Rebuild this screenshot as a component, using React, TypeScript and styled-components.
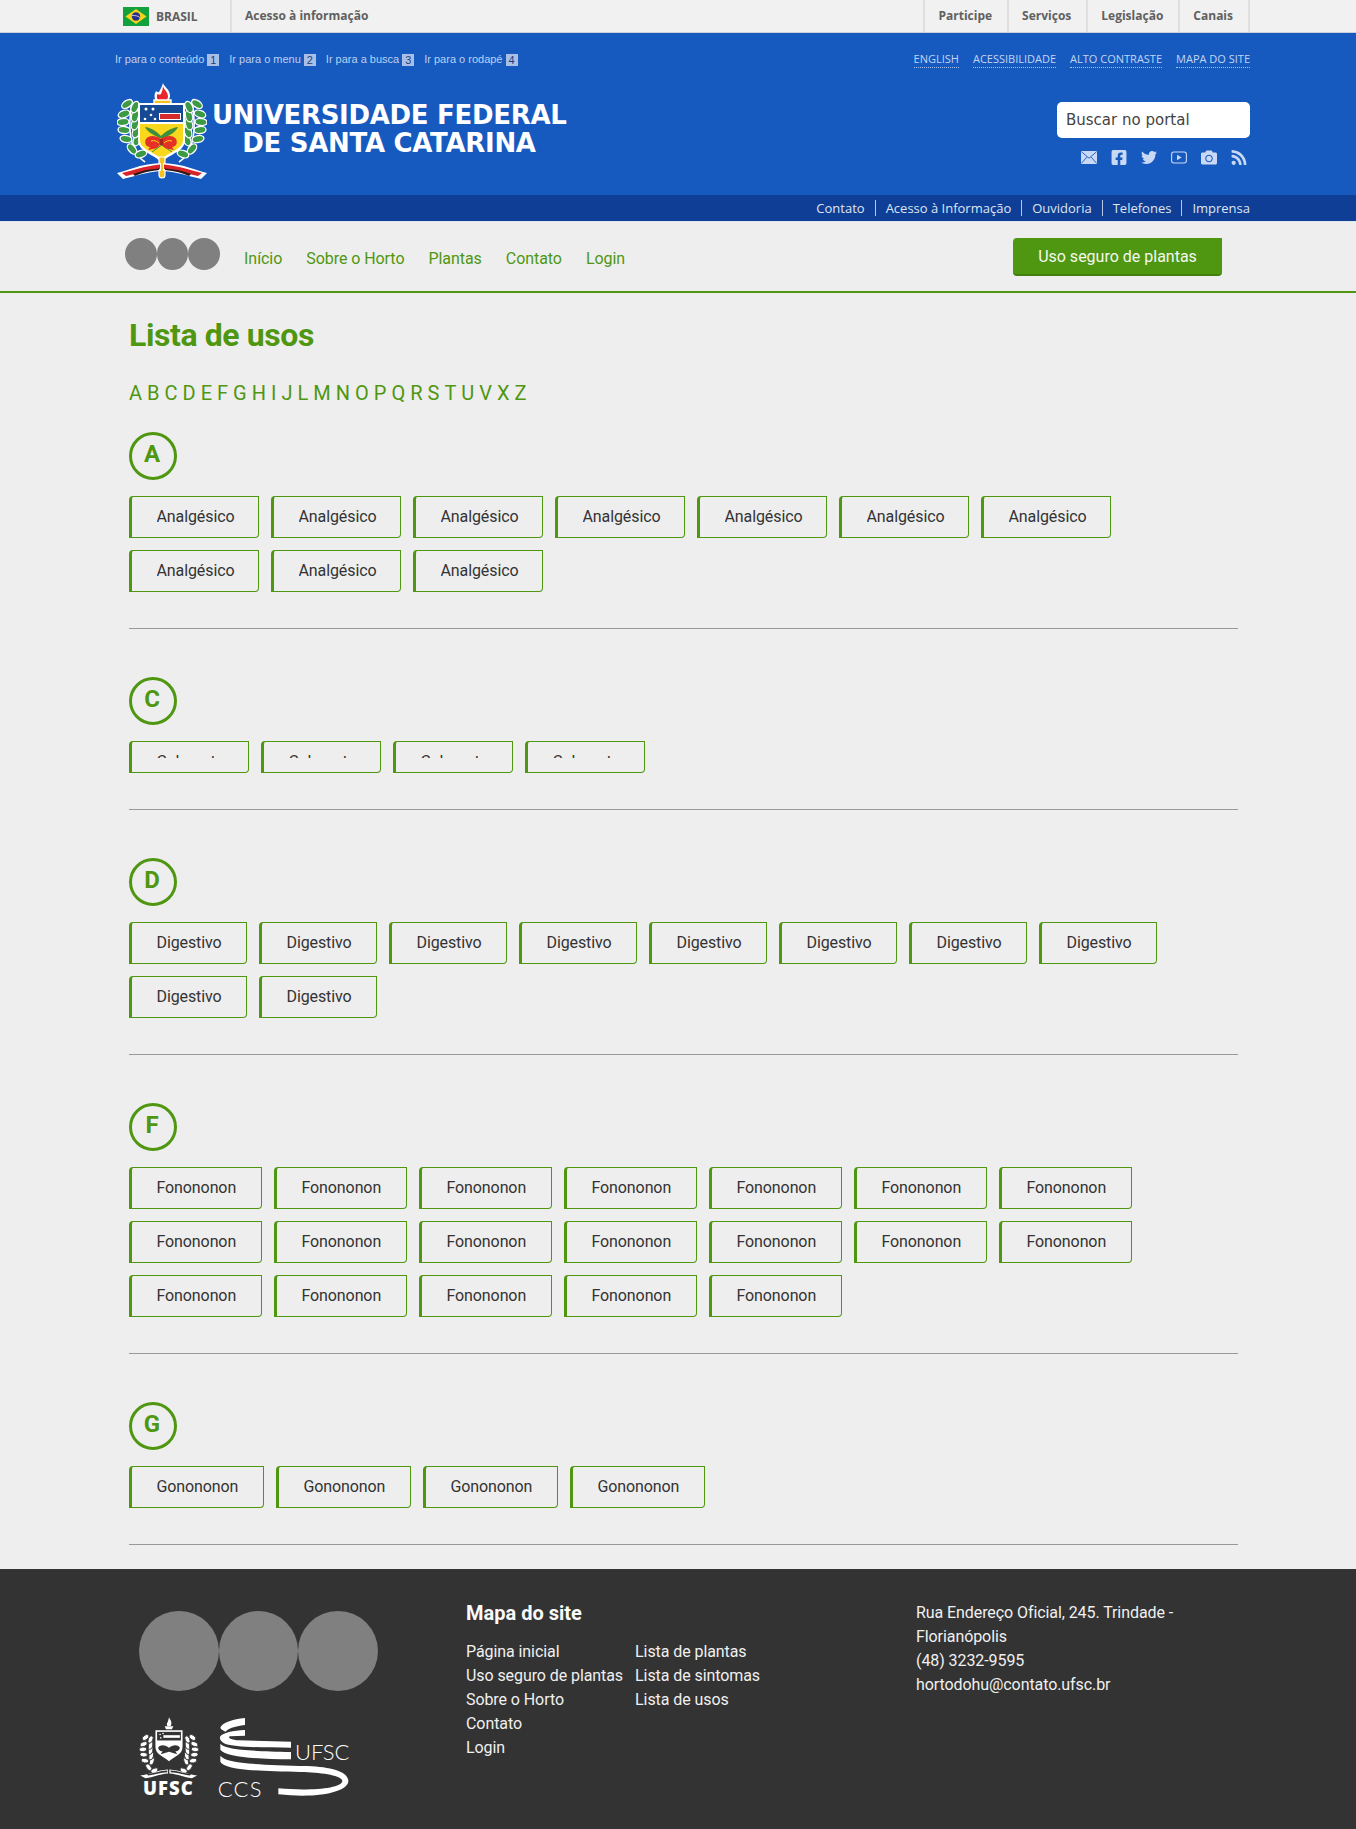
import React from "react";
import styled, { createGlobalStyle } from "styled-components";
import { FaFacebookSquare, FaTwitter, FaRss, FaCamera } from "react-icons/fa";

const green = "#4f9711";

const Global = createGlobalStyle`
  html, body { margin: 0; padding: 0; background: #eeeeee; }
  body { font-family: Roboto, "Liberation Sans", sans-serif; }
  a { text-decoration: none; color: inherit; }
  * { box-sizing: border-box; }
`;

const TopBar = styled.div`
  height: 33px;
  background: #f1f1f1;
  border-bottom: 1px solid #c9d0da;
  display: flex;
  justify-content: space-between;
  padding: 0 106px 0 123px;
  font-family: "Open Sans", sans-serif;
  font-size: 12px;
  font-weight: 700;
  color: #606060;
`;
const BarLeft = styled.div`display: flex; align-items: stretch;`;
const BrasilMark = styled.div`
  display: flex;
  align-items: center;
  gap: 7px;
  width: 109px;
  border-right: 2px solid #dfdfdf;
`;
const BrasilName = styled.span`padding-top: 1px;`;
const BarInfo = styled.a`display: flex; align-items: center; padding: 0 0 2px 13px;`;
const BarRight = styled.div`display: flex; border-right: 2px solid #dfdfdf;`;
const BarItem = styled.a`
  display: flex;
  align-items: center;
  padding: 0 15px 2px 13px;
  border-left: 2px solid #dfdfdf;
`;

const Masthead = styled.header`
  height: 162px;
  background: #175abf;
  padding: 18px 106px 0 115px;
`;
const SkipRow = styled.div`
  display: flex;
  justify-content: space-between;
  height: 17px;
`;
const SkipList = styled.div`
  display: flex;
  gap: 10px;
  font-family: "Liberation Sans", sans-serif;
  font-size: 11px;
  line-height: 17px;
  color: #bcd0f0;
`;
const SkipLink = styled.a`display: flex; align-items: center; gap: 3px;`;
const SkipKey = styled.span`
  width: 12px;
  height: 12px;
  background: #a9bfe6;
  color: #1f3f7c;
  font-size: 11px;
  line-height: 12px;
  text-align: center;
`;
const ToolList = styled.div`
  display: flex;
  gap: 14px;
  font-family: "Open Sans", sans-serif;
  font-size: 11px;
  line-height: 15px;
  color: #c3d5f3;
`;
const ToolLink = styled.a`
  height: 17px;
  border-bottom: 1px dotted #a9c2ea;
`;
const BrandRow = styled.div`
  display: flex;
  justify-content: space-between;
  padding-top: 15px;
`;
const Brand = styled.a`
  display: flex;
  align-items: flex-start;
  margin-left: 2px;
`;
const BrandName = styled.div`
  margin: 18px 0 0 5px;
  width: 354px;
  font-family: "DejaVu Sans", sans-serif;
  font-weight: 700;
  font-size: 26px;
  line-height: 28px;
  letter-spacing: -0.3px;
  color: #ffffff;
  text-align: center;
  white-space: nowrap;
`;
const SearchSide = styled.div`
  width: 193px;
  padding-top: 19px;
`;
const SearchBox = styled.div`
  height: 36px;
  background: #ffffff;
  border-radius: 5px;
  padding-left: 9px;
  font-family: "DejaVu Sans", sans-serif;
  font-size: 15px;
  line-height: 36px;
  color: #444444;
`;
const Socials = styled.div`
  display: flex;
  justify-content: flex-end;
  gap: 14px;
  margin-top: 11px;
  color: #c9d9f5;
  padding-right: 3px;
`;
const SocialSlot = styled.a`
  width: 16px;
  height: 17px;
  display: flex;
  align-items: center;
  justify-content: center;
  font-size: 17px;
`;

const ServiceStrip = styled.div`
  height: 27px;
  background: #0f3e96;
  border-bottom: 1px solid #dfe6f2;
  display: flex;
  justify-content: flex-end;
  align-items: center;
  padding-right: 106px;
  font-family: "Open Sans", sans-serif;
  font-size: 13px;
  color: #dfe6f2;
`;
const ServiceLink = styled.a`
  padding: 0 10px;
  line-height: 16px;
  border-left: 1px solid #b8c7e4;
  &:first-child { border-left: 0; }
  &:last-child { padding-right: 0; }
`;

const NavBar = styled.nav`
  height: 71px;
  border-bottom: 2px solid ${green};
  display: flex;
  align-items: flex-start;
  padding: 16px 134px 0 125px;
  font-size: 16px;
  color: ${green};
`;
const Dots = styled.div`display: flex; margin-right: 24px;`;
const Dot = styled.span<{ $size: number }>`
  display: block;
  width: ${(p) => p.$size}px;
  height: ${(p) => Math.round(p.$size)}px;
  border-radius: 50%;
  background: #808080;
`;
const NavLinks = styled.div`
  display: flex;
  gap: 24px;
  flex: 1;
  line-height: 20px;
  padding-top: 11px;
  letter-spacing: -0.06px;
`;
const SafeButton = styled.a`
  width: 209px;
  height: 38px;
  background: ${green};
  border-bottom: 2px solid #437f0e;
  border-radius: 4px 0 4px 4px;
  color: #f4f8ee;
  text-align: center;
  line-height: 37px;
`;

const Main = styled.main`
  padding: 22px 118px 0 129px;
`;
const Title = styled.h1`
  margin: 0;
  font-size: 32px;
  line-height: 40px;
  font-weight: 700;
  letter-spacing: -0.4px;
  color: ${green};
`;
const Alphabet = styled.div`
  margin: 26px 0 27px;
  display: flex;
  gap: 5px;
  font-size: 20px;
  line-height: 24px;
  color: ${green};
`;
const Section = styled.section`
  padding-bottom: 36px;
  margin-bottom: 48px;
  border-bottom: 1px solid #999999;
  &:last-child { margin-bottom: 24px; }
`;
const LetterBadge = styled.div`
  width: 48px;
  height: 48px;
  border: 3px solid ${green};
  border-radius: 50%;
  display: flex;
  align-items: center;
  justify-content: center;
  padding: 0 2px 4px 0;
  font-size: 24px;
  font-weight: 700;
  color: ${green};
`;
const Chips = styled.div`
  display: flex;
  flex-wrap: wrap;
  gap: 12px;
  margin-top: 16px;
`;
const Chip = styled.a<{ $short?: boolean; $width: number }>`
  width: ${(p) => p.$width}px;
  height: ${(p) => (p.$short ? 32 : 42)}px;
  padding: 10px 0 0 24.5px;
  border: 1px solid ${green};
  border-left-width: 3px;
  border-radius: 4px 0 4px 0;
  font-size: 16px;
  line-height: 20px;
  letter-spacing: -0.1px;
  color: #333333;
  overflow: hidden;
`;
const ChipLabel = styled.span<{ $short?: boolean }>`
  display: block;
  height: ${(p) => (p.$short ? 6 : 20)}px;
  overflow: hidden;
`;

const Footer = styled.footer`
  height: 260px;
  background: #333333;
  display: grid;
  grid-template-columns: 327px 450px 280px;
  padding: 32px 0 0 139px;
  color: #f0f0f0;
  font-size: 16px;
  line-height: 24px;
  letter-spacing: -0.08px;
`;
const FootLogos = styled.div`padding-top: 10px;`;
const FootDots = styled.div`display: flex;`;
const FootMarks = styled.div`
  display: flex;
  gap: 18px;
  margin-top: 25px;
`;
const SiteMap = styled.div``;
const SiteMapTitle = styled.h3`
  margin: 0 0 15px;
  font-size: 20px;
  line-height: 24px;
  font-weight: 700;
  letter-spacing: 0;
  color: #fafafa;
`;
const SiteMapCols = styled.div`display: flex; gap: 12px;`;
const SiteMapCol = styled.div`display: flex; flex-direction: column;`;
const Address = styled.address`
  font-style: normal;
  width: 270px;
`;

const Leaves = ({ fill, edge }: { fill: string; edge: string }) => {
  const leaves = [
    [20, 51, -24], [9, 50, 55], [19, 43, -28], [7, 41, 50], [18, 35, -30], [6, 33, 40],
    [18, 27, -32], [7, 25, 25], [18, 18, -20], [10, 15, 10],
  ];
  return (
    <g>
      <path d="M28 73C14 64 10 42 15 12" fill="none" stroke={edge} strokeWidth="1.6" />
      {leaves.map(([x, y, r], i) => (
        <ellipse key={i} cx={x} cy={y} rx="3.500" ry="6" transform={`rotate(${r + 45} ${x} ${y})`} fill={fill} stroke={edge} strokeWidth="1.300" />
      ))}
      <ellipse cx="15" cy="60" rx="3.500" ry="6" transform="rotate(-40 15 60)" fill={fill} stroke={edge} strokeWidth="1.300" />
      <ellipse cx="24" cy="65" rx="3.500" ry="6" transform="rotate(70 24 65)" fill={fill} stroke={edge} strokeWidth="1.300" />
    </g>
  );
};

const CrestColor = () => (
  <svg width="90" height="97" viewBox="0 0 90 97">
    <g transform="translate(0 6)"><Leaves fill="#3b9a43" edge="#ffffff" /></g>
    <g transform="translate(90 6) scale(-1 1)"><Leaves fill="#3b9a43" edge="#ffffff" /></g>
    <path d="M46 0c1 4 7 6 7 13 0 2-1 3-2 5H39c-2-3-2-7 0-10 1 1 2 1.500 3 1 1-2 3-5 4-9z" fill="#ffffff" />
    <path d="M46 3c1 4 5 6 5 10.500 0 1-.500 2-1 3.500h-9c-1.500-2-1.500-4-.500-6 1 .500 2 1 3.500 0 1-2 1.800-5 2-8z" fill="#e8242c" />
    <path d="M37 17h17v3c0 3-4 5-6 6v4h-5v-4c-2-1-6-3-6-6z" fill="#f6c21c" stroke="#ffffff" strokeWidth="1.400" />
    <path d="M21 20h47v37c0 11-13 13-23.500 22C34 70 21 68 21 57z" fill="#ffffff" />
    <path d="M23 22h43v35c0 9-12 11-21.500 19C35 68 23 66 23 57z" fill="#f9d71c" />
    <path d="M23 22h43v17H23z" fill="#174a94" />
    <path d="M23 39h43v2H23z" fill="#ffffff" />
    <path d="M42 30h22v7H42z" fill="#ffffff" />
    <path d="M43 31h20v5H43z" fill="#d72a2e" />
    <circle cx="29" cy="26" r="1.500" fill="#ffffff" /><circle cx="36" cy="26" r="1.500" fill="#ffffff" />
    <circle cx="34" cy="32" r="1.300" fill="#ffffff" /><circle cx="28" cy="36" r="1.300" fill="#ffffff" /><circle cx="38" cy="36" r="1.300" fill="#ffffff" />
    <path d="M28 44c8 1 13 6 16 9 3-3 9-8 17-9-2 5-9 9-16 12-7-3-15-7-17-12z" fill="#3f8e3c" />
    <path d="M33 54l22 15M56 54L35 69" stroke="#3f8e3c" strokeWidth="1" />
    <path d="M44 56c-3-3-12-5-15 0-2 4 0 8 4 8l-2 3 5-1c4 0 7-3 8-7 1 4 4 7 8 7l5 1-2-3c4 0 6-4 4-8-3-5-12-3-15 0z" fill="#e43026" />
    <path d="M34 58c3-1 6 0 8 2M55 58c-3-1-6 0-8 2" stroke="#f9d71c" strokeWidth="1" fill="none" />
    <path d="M43 56h3v6h-3z" fill="#a8231c" />
    <path d="M42 74h6v18c0 4-6 4-6 0z" fill="#f6c21c" stroke="#ffffff" strokeWidth="1.200" />
    <path d="M0 90c10-2 22-9 44-10v8C30 89 18 93 6 96z" fill="#ffffff" />
    <path d="M90 90c-10-2-22-9-44-10v8c14 1 26 5 38 8z" fill="#ffffff" />
    <path d="M5 90c10-2 22-7 38-8.500V86C30 87 18 91 9 93z" fill="#d8232a" />
    <path d="M85 90c-10-2-22-7-38-8.500V86c13 1 25 5 34 7z" fill="#d8232a" />
    <path d="M16 91c8-3 16-5 26-5.500v1.500C32 88 24 90 18 93zM74 91c-8-3-16-5-26-5.500v1.500c10 1 18 3 24 6z" fill="#2b1a1a" />
  </svg>
);

const CrestMono = () => (
  <svg width="60" height="81" viewBox="55 410 180 245">
    <path d="M145 414c3 8 9 12 7 20 0 3-1 4-2 6h-10c-2-4-2-8 1-11 1-4 3-8 4-15z" fill="#ffffff" />
    <path d="M132 441h26l-4 9h-18z" fill="#ffffff" />
    <g transform="translate(55 445) scale(1.900 2)"><Leaves fill="#ffffff" edge="#333333" /></g>
    <g transform="translate(235 445) scale(-1.900 2)"><Leaves fill="#ffffff" edge="#333333" /></g>
    <path d="M104 453h82v50c0 24-24 28-41 44-17-16-41-20-41-44z" fill="#ffffff" />
    <path d="M109 458h72v26h-72z" fill="#333333" />
    <path d="M128 468h50v8h-50z" fill="#ffffff" />
    <circle cx="118" cy="466" r="2.500" fill="#ffffff" /><circle cx="127" cy="463" r="2.500" fill="#ffffff" /><circle cx="120" cy="476" r="2.500" fill="#ffffff" />
    <path d="M112 506c8-12 23-8 33 0 10-8 25-12 33 0-2 8-8 12-14 10l6 10-25-8-25 8 6-10c-6 2-12-2-14-10z" fill="#333333" />
    <path d="M58 590c28-2 50-16 84-18v12c-28 2-44 12-68 14z" fill="#ffffff" />
    <path d="M230 590c-28-2-50-16-84-18v12c28 2 44 12 68 14z" fill="#ffffff" />
    <path d="M78 586c22-2 40-10 62-11v5c-22 1-40 8-58 10zM212 586c-22-2-40-10-62-11v5c22 1 40 8 58 10z" fill="#333333" />
    <text x="143" y="650" textAnchor="middle" fontFamily="Open Sans, sans-serif" fontWeight="800" fontSize="56" letterSpacing="3" fill="#ffffff">UFSC</text>
  </svg>
);

const CcsMark = () => (
  <svg width="134" height="83" viewBox="288 405 402 249">
    <g fill="#ffffff">
      <path d="M372 411V432C340 436 318 444 314 452C306 448 298 444 298 440C302 426 336 414 372 411Z" />
      <path d="M372 447V464L326 466C320 470 330 476 352 478L510 482V500C420 500 340 498 312 488C300 482 294 474 298 466C306 456 336 448 372 447Z" />
      <path d="M298 488C312 504 370 510 510 513V535C400 534 316 528 298 506Z" />
      <path d="M298 524C314 545 390 552 560 555C630 558 682 572 682 600C682 630 600 654 472 640V622C560 630 662 624 664 600C664 584 600 574 540 573C400 570 310 566 298 542Z" />
    </g>
    <text x="522" y="537" fontFamily="Lato, sans-serif" fontWeight="300" fontSize="66" fill="#ffffff">UFSC</text>
    <text x="290" y="647" fontFamily="Lato, sans-serif" fontWeight="300" fontSize="66" letterSpacing="4" fill="#ffffff">CCS</text>
  </svg>
);

const Flag = () => (
  <svg width="26" height="19" viewBox="0 0 26 19">
    <rect width="26" height="19" fill="#12a13c" />
    <path d="M13 2l10.500 7.500L13 17 2.500 9.500z" fill="#f7d417" />
    <circle cx="13" cy="9.500" r="4.200" fill="#2a2f8f" />
    <path d="M9 8.600c3-.400 6 .300 8 2" stroke="#ffffff" strokeWidth=".7" fill="none" />
  </svg>
);

const MailIcon = () => (
  <svg width="16" height="13" viewBox="0 0 16 13">
    <rect width="16" height="13" rx=".8" fill="currentColor" />
    <path d="M.5.800L8 7.200 15.500.800M.5 12.200L6 6M15.500 12.200L10 6" fill="none" stroke="#175abf" strokeWidth=".9" />
  </svg>
);
const PlayIcon = () => (
  <svg width="16" height="13" viewBox="0 0 16 13">
    <rect x=".6" y="1" width="14.800" height="11" rx="2.200" fill="none" stroke="currentColor" strokeWidth="1.100" />
    <path d="M6 3.800l4.600 2.700L6 9.200z" fill="currentColor" />
  </svg>
);

const alphabet = "A B C D E F G H I J L M N O P Q R S T U V X Z".split(" ");
const sections: { letter: string; word: string; count: number; width: number; short?: boolean }[] = [
  { letter: "A", word: "Analgésico", count: 10, width: 130 },
  { letter: "C", word: "Calmante", count: 4, width: 120, short: true },
  { letter: "D", word: "Digestivo", count: 10, width: 118 },
  { letter: "F", word: "Fonononon", count: 19, width: 133 },
  { letter: "G", word: "Gonononon", count: 4, width: 135 },
];

export default function App() {
  return (
    <>
      <Global />
      <TopBar>
        <BarLeft>
          <BrasilMark><Flag /><BrasilName>BRASIL</BrasilName></BrasilMark>
          <BarInfo>Acesso à informação</BarInfo>
        </BarLeft>
        <BarRight>
          {["Participe", "Serviços", "Legislação", "Canais"].map((t) => <BarItem key={t}>{t}</BarItem>)}
        </BarRight>
      </TopBar>
      <Masthead>
        <SkipRow>
          <SkipList>
            {["Ir para o conteúdo", "Ir para o menu", "Ir para a busca", "Ir para o rodapé"].map((t, i) => (
              <SkipLink key={t}>{t}<SkipKey>{i + 1}</SkipKey></SkipLink>
            ))}
          </SkipList>
          <ToolList>
            {["ENGLISH", "ACESSIBILIDADE", "ALTO CONTRASTE", "MAPA DO SITE"].map((t) => <ToolLink key={t}>{t}</ToolLink>)}
          </ToolList>
        </SkipRow>
        <BrandRow>
          <Brand>
            <CrestColor />
            <BrandName>UNIVERSIDADE FEDERAL<br />DE SANTA CATARINA</BrandName>
          </Brand>
          <SearchSide>
            <SearchBox>Buscar no portal</SearchBox>
            <Socials>
              <SocialSlot><MailIcon /></SocialSlot>
              <SocialSlot><FaFacebookSquare /></SocialSlot>
              <SocialSlot><FaTwitter /></SocialSlot>
              <SocialSlot><PlayIcon /></SocialSlot>
              <SocialSlot><FaCamera /></SocialSlot>
              <SocialSlot><FaRss /></SocialSlot>
            </Socials>
          </SearchSide>
        </BrandRow>
      </Masthead>
      <ServiceStrip>
        {["Contato", "Acesso à Informação", "Ouvidoria", "Telefones", "Imprensa"].map((t) => <ServiceLink key={t}>{t}</ServiceLink>)}
      </ServiceStrip>
      <NavBar>
        <Dots><Dot $size={31.7} /><Dot $size={31.7} /><Dot $size={31.7} /></Dots>
        <NavLinks>
          {["Início", "Sobre o Horto", "Plantas", "Contato", "Login"].map((t) => <a key={t}>{t}</a>)}
        </NavLinks>
        <SafeButton>Uso seguro de plantas</SafeButton>
      </NavBar>
      <Main>
        <Title>Lista de usos</Title>
        <Alphabet>{alphabet.map((l) => <a key={l}>{l}</a>)}</Alphabet>
        {sections.map((s) => (
          <Section key={s.letter}>
            <LetterBadge>{s.letter}</LetterBadge>
            <Chips>
              {Array.from({ length: s.count }, (_, i) => (
                <Chip key={i} $short={s.short} $width={s.width}><ChipLabel $short={s.short}>{s.word}</ChipLabel></Chip>
              ))}
            </Chips>
          </Section>
        ))}
      </Main>
      <Footer>
        <FootLogos>
          <FootDots><Dot $size={79.6} /><Dot $size={79.6} /><Dot $size={79.6} /></FootDots>
          <FootMarks><CrestMono /><CcsMark /></FootMarks>
        </FootLogos>
        <SiteMap>
          <SiteMapTitle>Mapa do site</SiteMapTitle>
          <SiteMapCols>
            <SiteMapCol>
              {["Página inicial", "Uso seguro de plantas", "Sobre o Horto", "Contato", "Login"].map((t) => <a key={t}>{t}</a>)}
            </SiteMapCol>
            <SiteMapCol>
              {["Lista de plantas", "Lista de sintomas", "Lista de usos"].map((t) => <a key={t}>{t}</a>)}
            </SiteMapCol>
          </SiteMapCols>
        </SiteMap>
        <Address>
          Rua Endereço Oficial, 245. Trindade - Florianópolis<br />
          (48) 3232-9595<br />
          hortodohu@contato.ufsc.br
        </Address>
      </Footer>
    </>
  );
}
